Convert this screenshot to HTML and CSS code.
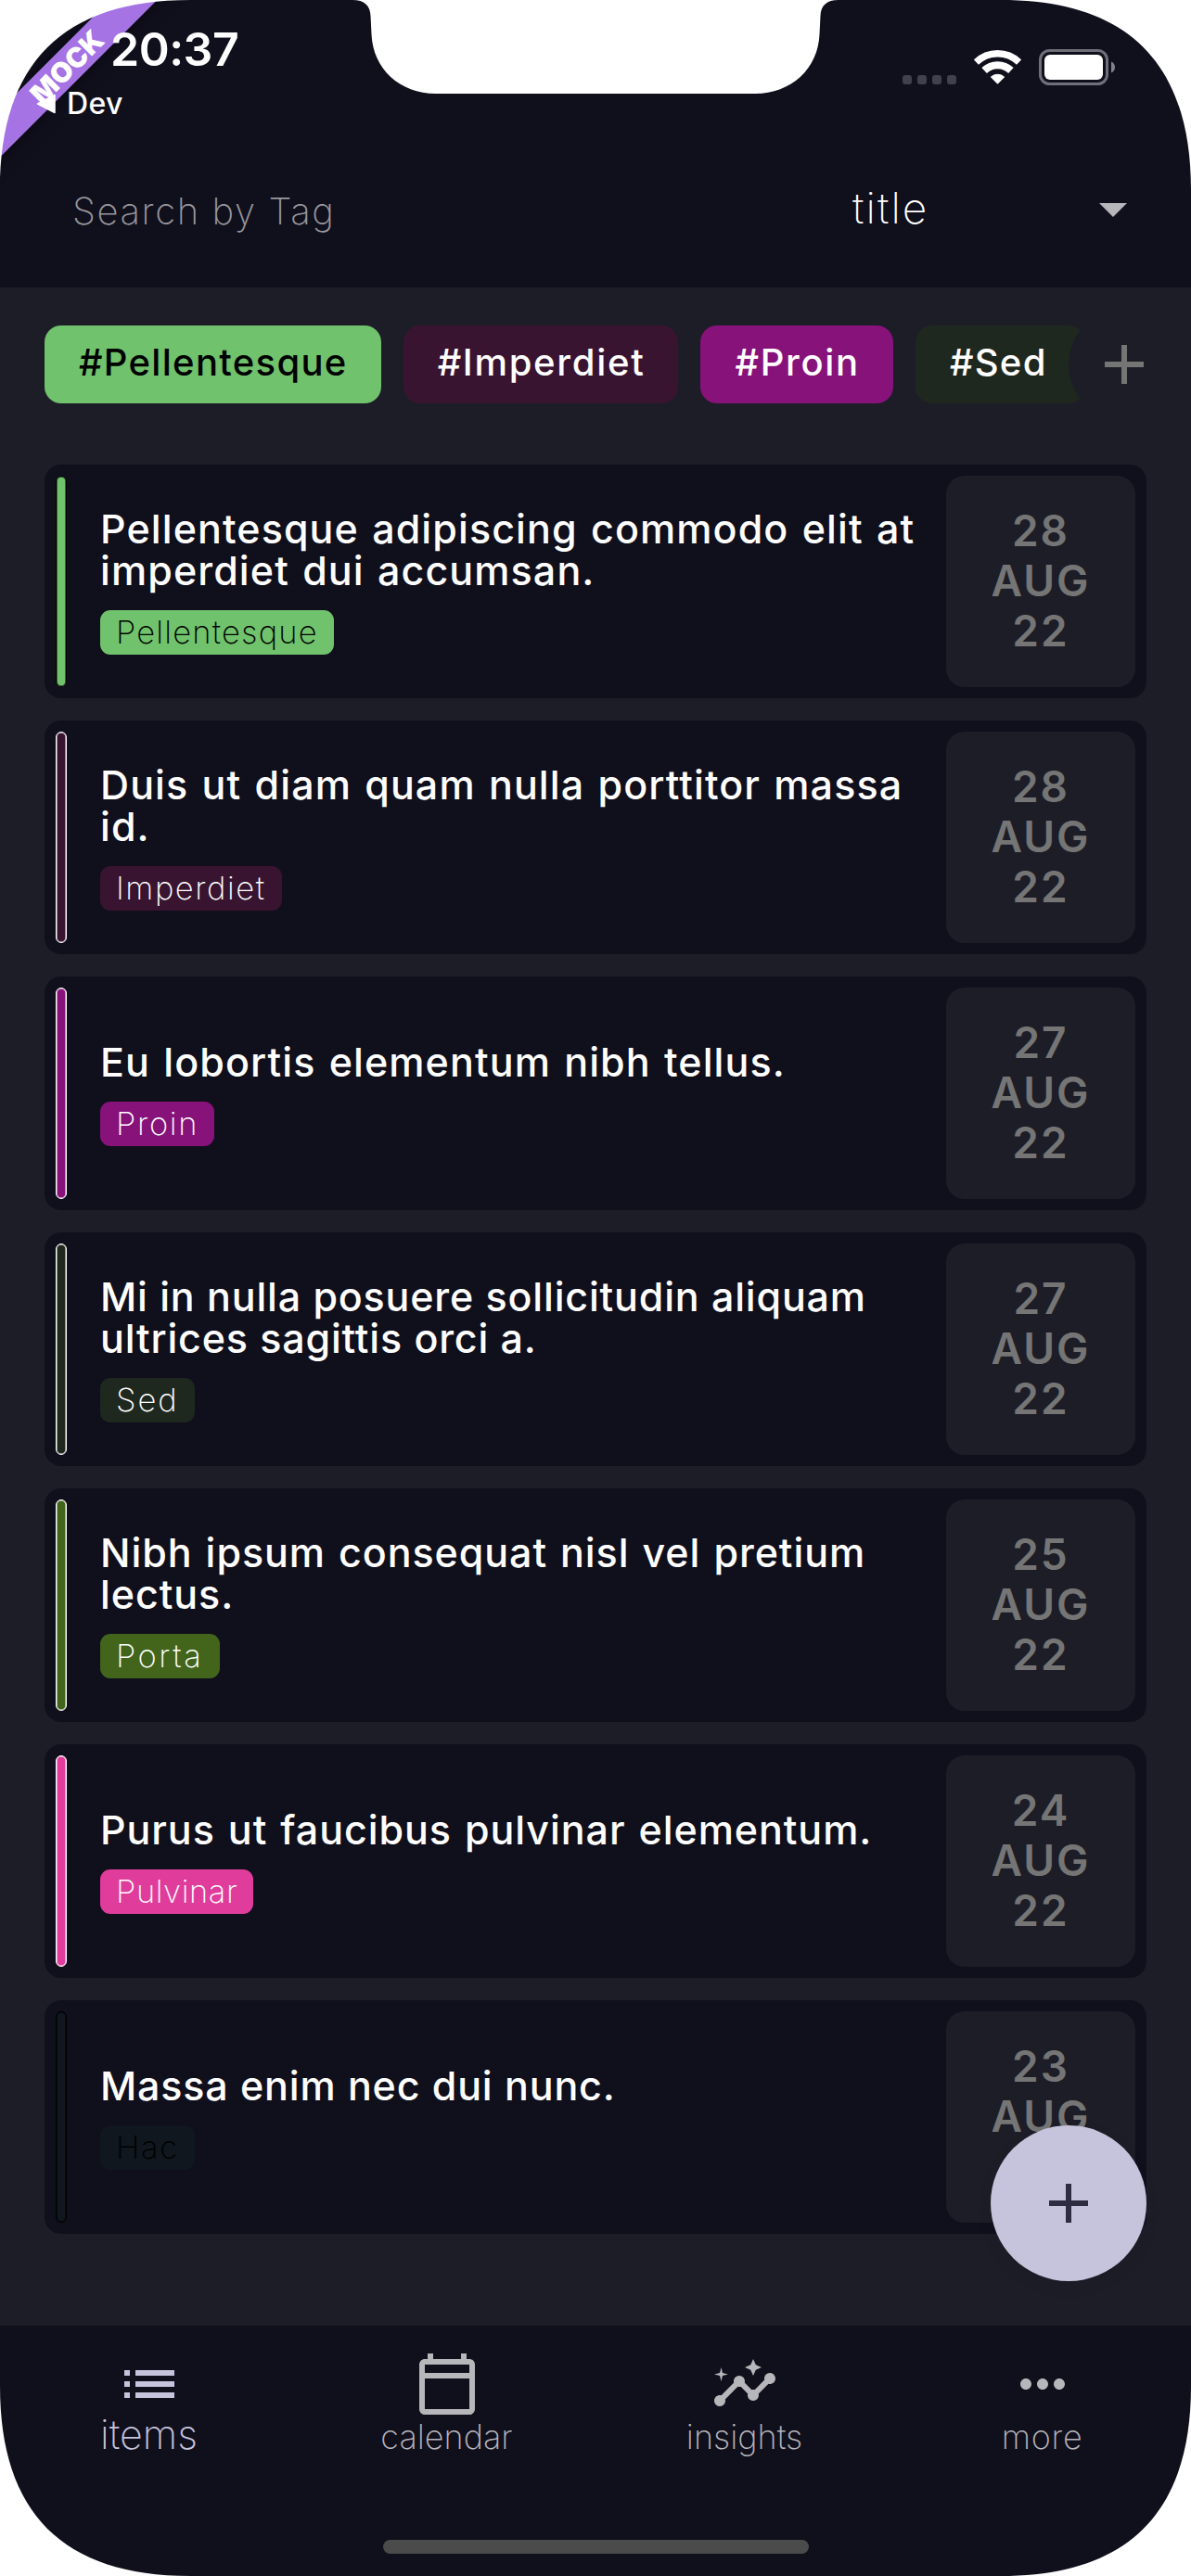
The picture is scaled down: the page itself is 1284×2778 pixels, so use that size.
FILE: index.html
```html
<!DOCTYPE html>
<html lang="en">
<head>
<meta charset="utf-8">
<title>Items</title>
<link rel="stylesheet" href="styles.css">
</head>
<body>
<div class="screen">
  <header class="header">
    <div class="ribbon">MOCK</div>
    <div class="status">
      <div class="status-left">
        <div class="time">20:37</div>
        <div class="back">
          <svg width="21" height="22" viewBox="0 0 21 22"><path d="M20 1.500V20.500L1.500 11Z" fill="#fff" stroke="#fff" stroke-width="1.500" stroke-linejoin="round"/></svg>
          <span>Dev</span>
        </div>
      </div>
      <div class="status-icons">
        <svg width="58" height="10" viewBox="0 0 58 10" fill="#42404d"><rect width="10" height="10" rx="3"/><rect x="16" width="10" height="10" rx="3"/><rect x="32" width="10" height="10" rx="3"/><rect x="48" width="10" height="10" rx="3"/></svg>
        <svg width="51" height="37" viewBox="0 0 51 37"><g fill="none" stroke="#fff"><path stroke-width="7.400" d="M2.400 13.100A33.200 33.200 0 0 1 48.600 13.100"/><path stroke-width="8" d="M11.100 22A20.800 20.800 0 0 1 39.900 22"/></g><path fill="#fff" stroke="#fff" stroke-width="1" stroke-linejoin="round" d="M18.300 29A10.800 10.800 0 0 1 32.700 29L25.500 36.200Z"/></svg>
        <svg class="battery" width="82" height="39" viewBox="0 0 82 39"><rect x="1.500" y="1.500" width="72" height="36" rx="10" fill="none" stroke="#6f6e79" stroke-width="3"/><rect x="6" y="6" width="63" height="27" rx="6" fill="#fff"/><path d="M78 13.500C80.700 14.600 82 16.800 82 19.500S80.700 24.400 78 25.500Z" fill="#82818b"/></svg>
      </div>
    </div>
    <div class="search">
      <div class="placeholder">Search by Tag</div>
      <div class="select">
        <span>title</span>
        <svg width="30" height="15" viewBox="0 0 30 15"><path d="M0 0H30L15 15Z" fill="#b7b6bb"/></svg>
      </div>
    </div>
  </header>

  <main class="main">
    <div class="chips">
      <div class="chip green">#Pellentesque</div>
      <div class="chip plum">#Imperdiet</div>
      <div class="chip purple">#Proin</div>
      <div class="chip forest">#Sed</div>
      <div class="add-tag"><svg width="42" height="42" viewBox="0 0 42 42"><path d="M21 0V42M0 21H42" stroke="#757575" stroke-width="6"/></svg></div>
    </div>

    <div class="list">
      <article class="card">
        <div class="stripe green"></div>
        <div class="body"><h2>Pellentesque adipiscing commodo elit at<br>imperdiet dui accumsan.</h2><span class="tag green">Pellentesque</span></div>
        <div class="date"><span>28</span><span>AUG</span><span>22</span></div>
      </article>
      <article class="card">
        <div class="stripe plum"></div>
        <div class="body"><h2>Duis ut diam quam nulla porttitor massa<br>id.</h2><span class="tag plum">Imperdiet</span></div>
        <div class="date"><span>28</span><span>AUG</span><span>22</span></div>
      </article>
      <article class="card">
        <div class="stripe purple"></div>
        <div class="body"><h2>Eu lobortis elementum nibh tellus.</h2><span class="tag purple">Proin</span></div>
        <div class="date"><span>27</span><span>AUG</span><span>22</span></div>
      </article>
      <article class="card">
        <div class="stripe forest"></div>
        <div class="body"><h2 class="tight">Mi in nulla posuere sollicitudin aliquam<br>ultrices sagittis orci a.</h2><span class="tag forest">Sed</span></div>
        <div class="date"><span>27</span><span>AUG</span><span>22</span></div>
      </article>
      <article class="card">
        <div class="stripe olive"></div>
        <div class="body"><h2 class="snug">Nibh ipsum consequat nisl vel pretium<br>lectus.</h2><span class="tag olive">Porta</span></div>
        <div class="date"><span>25</span><span>AUG</span><span>22</span></div>
      </article>
      <article class="card">
        <div class="stripe pink"></div>
        <div class="body"><h2 class="snug">Purus ut faucibus pulvinar elementum.</h2><span class="tag pink">Pulvinar</span></div>
        <div class="date"><span>24</span><span>AUG</span><span>22</span></div>
      </article>
      <article class="card">
        <div class="stripe night"></div>
        <div class="body"><h2 class="tight">Massa enim nec dui nunc.</h2><span class="tag night">Hac</span></div>
        <div class="date"><span>23</span><span>AUG</span><span>22</span></div>
      </article>
    </div>
    <div class="fab"><svg width="42" height="42" viewBox="0 0 42 42"><path d="M21 0V42M0 21H42" stroke="#2c2d41" stroke-width="6"/></svg></div>
  </main>

  <nav class="nav">
    <div class="nav-item active">
      <svg class="nav-icon" viewBox="0 0 24 24"><path d="M3 13h2v-2H3v2zm0 4h2v-2H3v2zm0-8h2V7H3v2zm4 4h14v-2H7v2zm0 4h14v-2H7v2zM7 7v2h14V7H7z"/></svg>
      <span>items</span>
    </div>
    <div class="nav-item">
      <svg class="nav-icon" viewBox="0 0 24 24"><path d="M20 3h-1V1h-2v2H7V1H5v2H4c-1.100 0-2 .9-2 2v16c0 1.100.9 2 2 2h16c1.100 0 2-.9 2-2V5c0-1.100-.9-2-2-2zm0 18H4V10h16v11zm0-13H4V5h16v3z"/></svg>
      <span>calendar</span>
    </div>
    <div class="nav-item">
      <svg class="nav-icon" viewBox="0 0 24 24"><path d="M21 8c-1.450 0-2.260 1.440-1.930 2.510l-3.550 3.560c-.3-.09-.74-.09-1.040 0l-2.550-2.550C12.270 10.450 11.460 9 10 9c-1.450 0-2.270 1.440-1.930 2.520l-4.560 4.550C2.440 15.740 1 16.550 1 18c0 1.100.9 2 2 2 1.450 0 2.260-1.440 1.930-2.510l4.550-4.560c.3.09.74.09 1.040 0l2.550 2.550C12.730 16.550 13.540 18 15 18c1.450 0 2.270-1.440 1.930-2.520l3.560-3.550C21.560 12.260 23 11.450 23 10c0-1.100-.9-2-2-2z"/><path d="M15 9l.94-2.070L18 6l-2.060-.93L15 3l-.92 2.070L12 6l2.080.93zM3.500 11L4 9l2-.5L4 8l-.5-2L3 8l-2 .5L3 9z"/></svg>
      <span>insights</span>
    </div>
    <div class="nav-item more">
      <svg class="nav-icon" viewBox="0 0 24 24"><path d="M6 10c-1.100 0-2 .9-2 2s.9 2 2 2 2-.9 2-2-.9-2-2-2zm12 0c-1.100 0-2 .9-2 2s.9 2 2 2 2-.9 2-2-.9-2-2-2zm-6 0c-1.100 0-2 .9-2 2s.9 2 2 2 2-.9 2-2-.9-2-2-2z"/></svg>
      <span>more</span>
    </div>
    <div class="home-bar"></div>
  </nav>

  <svg class="bezel" width="1284" height="2778" viewBox="0 0 1284 2778" fill="#fff">
    <path d="M0 0H205C68 0 0 68 0 205Z"/>
    <path d="M1284 0H1079C1216 0 1284 68 1284 205Z"/>
    <path d="M0 2778H205C68 2778 0 2710 0 2573Z"/>
    <path d="M1284 2778H1079C1216 2778 1284 2710 1284 2573Z"/>
    <path d="M380 0C393 0 399 6 399.500 17L400.500 37C402 74 431 101 470 101H814C853 101 882 74 883.500 37L884.500 17C885 6 891 0 904 0Z"/>
  </svg>
</div>
</body>
</html>
```
FILE: styles.css
```css
* { box-sizing: border-box; }

body {
  margin: 0;
  background: #fff;
  font-family: Inter, "Liberation Sans", sans-serif;
}

svg { display: block; flex: none; }

.screen {
  position: relative;
  display: flex;
  flex-direction: column;
  width: 1284px;
  height: 2778px;
  overflow: hidden;
  background: #1d1d28;
  color: #fff;
}

.bezel { position: absolute; inset: 0; }

/* Header */
.header {
  position: relative;
  height: 310px;
  flex: none;
  background: #100f1c;
  overflow: hidden;
}

.ribbon {
  position: absolute;
  left: -78px;
  top: 54px;
  width: 300px;
  height: 36px;
  transform: rotate(-45deg);
  background: #a573e4;
  box-shadow: 0 0 18px rgba(0, 0, 0, .5);
  font-size: 30px;
  font-weight: 900;
  line-height: 36px;
  text-align: center;
}

.status {
  position: relative;
  display: flex;
  justify-content: space-between;
  height: 152px;
  padding: 24px 82px 0 39px;
}

.time {
  padding-left: 80px;
  font-size: 50px;
  font-weight: 600;
  line-height: 58px;
  letter-spacing: -.5px;
}

.back {
  display: flex;
  align-items: center;
  gap: 12px;
  font-size: 32px;
  font-weight: 500;
  line-height: 59px;
  letter-spacing: .4px;
}

.status-icons {
  display: flex;
  align-items: flex-end;
  gap: 19px;
  height: 67px;
}

.battery { margin-bottom: -1px; }

.search {
  display: flex;
  height: 152px;
  padding: 0 69px 0 78px;
  font-weight: 200;
}

.placeholder {
  width: 841px;
  font-size: 40px;
  line-height: 152px;
  letter-spacing: 1.600px;
  color: #98979c;
}

.select {
  display: flex;
  flex: 1;
  align-items: center;
  justify-content: space-between;
  height: 143px;
  font-size: 46px;
  letter-spacing: 2.100px;
}

.select svg { margin-top: 6px; }

/* Content */
.main {
  position: relative;
  height: 2198px;
  flex: none;
  padding: 41px 48px 0;
}

.chips {
  position: relative;
  display: flex;
  gap: 24px;
  height: 84px;
}

.chip {
  flex: none;
  height: 84px;
  padding: 0 36px 0 37px;
  border-radius: 18px;
  font-size: 40px;
  font-weight: 500;
  line-height: 79px;
  letter-spacing: 1.300px;
}

.chip.plum { letter-spacing: 1.700px; }
.chip.purple { letter-spacing: 1.700px; }
.chip.forest { padding-right: 41px; }

/* Round button that cuts into the last chip */
.add-tag {
  position: absolute;
  right: -36px;
  top: -18px;
  display: grid;
  place-items: center;
  width: 120px;
  height: 120px;
  border-radius: 50%;
  background: #1d1d28;
}

.list {
  display: flex;
  flex-direction: column;
  gap: 24px;
  padding-top: 66px;
}

.card {
  display: flex;
  height: 252px;
  padding: 12px;
  border-radius: 18px;
  background: #100f1c;
}

.stripe {
  flex: none;
  width: 12px;
  border: 1px solid currentColor;
  border-radius: 6px;
  box-shadow: inset 0 0 0 .5px currentColor;
}

.body {
  display: flex;
  flex: 1;
  flex-direction: column;
  align-items: flex-start;
  justify-content: center;
  gap: 20px;
  padding-left: 36px;
}

.body h2 {
  margin: 0;
  font-size: 43px;
  font-weight: 500;
  line-height: 45px;
  letter-spacing: 1.100px;
  word-spacing: 1.700px;
  white-space: nowrap;
}

.body h2.snug { letter-spacing: .93px; }
.body h2.tight { letter-spacing: .82px; word-spacing: .2px; }

.tag {
  height: 48px;
  padding: 0 17px;
  border-radius: 11px;
  font-size: 34.500px;
  font-weight: 200;
  line-height: 47px;
  letter-spacing: 1.200px;
}

.tag.plum { letter-spacing: 1.550px; }
.tag.purple { letter-spacing: 1.700px; }
.tag.forest { letter-spacing: 2px; }
.tag.olive { letter-spacing: 2.500px; padding-right: 18px; }
.tag.pink { letter-spacing: .6px; }
.tag.night { letter-spacing: 1.600px; }

.date {
  display: flex;
  flex: none;
  flex-direction: column;
  align-items: center;
  justify-content: center;
  width: 204px;
  padding-bottom: 2px;
  border-radius: 20px;
  background: #1d1d28;
  color: #757575;
  font-size: 46px;
  font-weight: 600;
  line-height: 54px;
  letter-spacing: 2px;
}

.green { background: #70c26c; color: #000; }
.plum { background: #391430; color: #fff; }
.purple { background: #87127a; color: #fff; }
.forest { background: #1f281f; color: #fff; }
.olive { background: #42641b; color: #fff; }
.pink { background: #e03c9b; color: #fff; }
.night { background: #10171e; color: #000; }

.fab {
  position: absolute;
  right: 48px;
  bottom: 48px;
  display: grid;
  place-items: center;
  width: 168px;
  height: 168px;
  border-radius: 50%;
  background: #c5c4dc;
  box-shadow: 0 6px 18px rgba(0, 0, 0, .06);
}

/* Bottom navigation */
.nav {
  position: relative;
  display: grid;
  grid-template-columns: repeat(4, 1fr);
  flex: 1;
  padding-top: 27px;
  background: #100f1c;
}

.nav-item {
  display: flex;
  flex-direction: column;
  align-items: center;
  color: #b7b6bb;
  font-size: 36px;
  font-weight: 200;
  line-height: 43px;
}

.nav-item.more { letter-spacing: .7px; }

.nav-icon { width: 72px; height: 72px; fill: currentColor; }

.nav-item.active {
  color: #c6c3dd;
  font-size: 43px;
  line-height: 36px;
}

.home-bar {
  position: absolute;
  left: 413px;
  bottom: 24px;
  width: 459px;
  height: 15px;
  border-radius: 8px;
  background: #4b4b4b;
}
```
